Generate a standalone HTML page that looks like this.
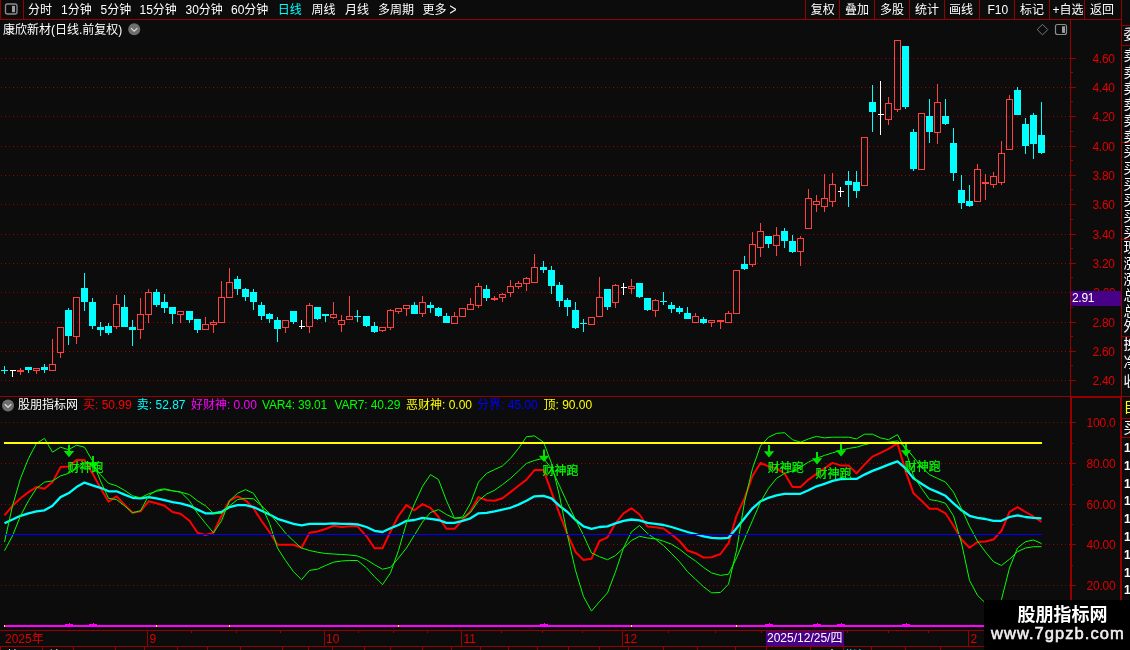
<!DOCTYPE html>
<html><head><meta charset="utf-8"><title>康欣新材 日线</title><style>
html,body{margin:0;padding:0;background:#0c0c0c;overflow:hidden}
body{width:1130px;height:650px;position:relative;overflow:hidden;font-family:"Liberation Sans","Noto Sans CJK SC",sans-serif;font-size:12px}
svg{position:absolute;left:0;top:0}
#txt{position:absolute;left:0;top:0;width:1130px;height:650px;overflow:hidden;will-change:transform}
.t{position:absolute;white-space:nowrap;line-height:16px;font-size:12px}
</style></head><body>
<svg width="1130" height="650" viewBox="0 0 1130 650" shape-rendering="crispEdges">
<defs><clipPath id="ind"><rect x="0" y="398" width="1070" height="230"/></clipPath></defs>
<line x1="0" y1="58.5" x2="1070" y2="58.5" stroke="#9c0000" stroke-width="1" stroke-dasharray="1 3" stroke-dashoffset="-1"/>
<line x1="0" y1="87.5" x2="1070" y2="87.5" stroke="#9c0000" stroke-width="1" stroke-dasharray="1 3" stroke-dashoffset="-1"/>
<line x1="0" y1="116.5" x2="1070" y2="116.5" stroke="#9c0000" stroke-width="1" stroke-dasharray="1 3" stroke-dashoffset="-1"/>
<line x1="0" y1="146.5" x2="1070" y2="146.5" stroke="#9c0000" stroke-width="1" stroke-dasharray="1 3" stroke-dashoffset="-1"/>
<line x1="0" y1="175.5" x2="1070" y2="175.5" stroke="#9c0000" stroke-width="1" stroke-dasharray="1 3" stroke-dashoffset="-1"/>
<line x1="0" y1="204.5" x2="1070" y2="204.5" stroke="#9c0000" stroke-width="1" stroke-dasharray="1 3" stroke-dashoffset="-1"/>
<line x1="0" y1="234.5" x2="1070" y2="234.5" stroke="#9c0000" stroke-width="1" stroke-dasharray="1 3" stroke-dashoffset="-1"/>
<line x1="0" y1="263.5" x2="1070" y2="263.5" stroke="#9c0000" stroke-width="1" stroke-dasharray="1 3" stroke-dashoffset="-1"/>
<line x1="0" y1="292.5" x2="1070" y2="292.5" stroke="#9c0000" stroke-width="1" stroke-dasharray="1 3" stroke-dashoffset="-1"/>
<line x1="0" y1="322.5" x2="1070" y2="322.5" stroke="#9c0000" stroke-width="1" stroke-dasharray="1 3" stroke-dashoffset="-1"/>
<line x1="0" y1="351.5" x2="1070" y2="351.5" stroke="#9c0000" stroke-width="1" stroke-dasharray="1 3" stroke-dashoffset="-1"/>
<line x1="0" y1="380.5" x2="1070" y2="380.5" stroke="#9c0000" stroke-width="1" stroke-dasharray="1 3" stroke-dashoffset="-1"/>
<line x1="0" y1="422.5" x2="1070" y2="422.5" stroke="#9c0000" stroke-width="1" stroke-dasharray="1 3" stroke-dashoffset="-1"/>
<line x1="0" y1="463.5" x2="1070" y2="463.5" stroke="#9c0000" stroke-width="1" stroke-dasharray="1 3" stroke-dashoffset="-1"/>
<line x1="0" y1="504.5" x2="1070" y2="504.5" stroke="#9c0000" stroke-width="1" stroke-dasharray="1 3" stroke-dashoffset="-1"/>
<line x1="0" y1="544.5" x2="1070" y2="544.5" stroke="#9c0000" stroke-width="1" stroke-dasharray="1 3" stroke-dashoffset="-1"/>
<line x1="0" y1="585.5" x2="1070" y2="585.5" stroke="#9c0000" stroke-width="1" stroke-dasharray="1 3" stroke-dashoffset="-1"/>
<rect x="0" y="19" width="1122" height="1" fill="#960000" />
<rect x="0" y="0" width="1" height="19" fill="#960000" />
<rect x="23" y="0" width="1" height="19" fill="#960000" />
<rect x="805" y="0" width="1" height="19" fill="#960000" />
<rect x="839" y="0" width="1" height="19" fill="#960000" />
<rect x="874" y="0" width="1" height="19" fill="#960000" />
<rect x="909" y="0" width="1" height="19" fill="#960000" />
<rect x="944" y="0" width="1" height="19" fill="#960000" />
<rect x="979" y="0" width="1" height="19" fill="#960000" />
<rect x="1014" y="0" width="1" height="19" fill="#960000" />
<rect x="1049" y="0" width="1" height="19" fill="#960000" />
<rect x="1084" y="0" width="1" height="19" fill="#960000" />
<rect x="1070" y="19" width="1" height="627" fill="#960000" />
<rect x="1071" y="397" width="1" height="249" fill="#960000" />
<rect x="1121" y="0" width="1" height="650" fill="#960000" />
<rect x="1120" y="397" width="1" height="253" fill="#960000" />
<rect x="0" y="396" width="1130" height="1" fill="#960000" />
<rect x="1070" y="397" width="51" height="1" fill="#960000" />
<rect x="0" y="630" width="1070" height="1" fill="#960000" />
<rect x="0" y="646" width="1070" height="1" fill="#960000" />
<rect x="1071" y="58" width="5" height="1" fill="#960000" />
<rect x="1071" y="72" width="2" height="1" fill="#960000" />
<rect x="1071" y="87" width="5" height="1" fill="#960000" />
<rect x="1071" y="101" width="2" height="1" fill="#960000" />
<rect x="1071" y="116" width="5" height="1" fill="#960000" />
<rect x="1071" y="131" width="2" height="1" fill="#960000" />
<rect x="1071" y="146" width="5" height="1" fill="#960000" />
<rect x="1071" y="160" width="2" height="1" fill="#960000" />
<rect x="1071" y="175" width="5" height="1" fill="#960000" />
<rect x="1071" y="189" width="2" height="1" fill="#960000" />
<rect x="1071" y="204" width="5" height="1" fill="#960000" />
<rect x="1071" y="219" width="2" height="1" fill="#960000" />
<rect x="1071" y="234" width="5" height="1" fill="#960000" />
<rect x="1071" y="248" width="2" height="1" fill="#960000" />
<rect x="1071" y="263" width="5" height="1" fill="#960000" />
<rect x="1071" y="277" width="2" height="1" fill="#960000" />
<rect x="1071" y="292" width="5" height="1" fill="#960000" />
<rect x="1071" y="307" width="2" height="1" fill="#960000" />
<rect x="1071" y="322" width="5" height="1" fill="#960000" />
<rect x="1071" y="336" width="2" height="1" fill="#960000" />
<rect x="1071" y="351" width="5" height="1" fill="#960000" />
<rect x="1071" y="365" width="2" height="1" fill="#960000" />
<rect x="1071" y="380" width="5" height="1" fill="#960000" />
<rect x="1072" y="422" width="4" height="1" fill="#960000" />
<rect x="1072" y="443" width="1" height="1" fill="#960000" />
<rect x="1072" y="463" width="4" height="1" fill="#960000" />
<rect x="1072" y="484" width="1" height="1" fill="#960000" />
<rect x="1072" y="504" width="4" height="1" fill="#960000" />
<rect x="1072" y="524" width="1" height="1" fill="#960000" />
<rect x="1072" y="544" width="4" height="1" fill="#960000" />
<rect x="1072" y="565" width="1" height="1" fill="#960000" />
<rect x="1072" y="585" width="4" height="1" fill="#960000" />
<rect x="1072" y="606" width="1" height="1" fill="#960000" />
<rect x="1072" y="626" width="4" height="1" fill="#960000" />
<rect x="147" y="630" width="1" height="16" fill="#960000" />
<rect x="324" y="630" width="1" height="16" fill="#960000" />
<rect x="461" y="630" width="1" height="16" fill="#960000" />
<rect x="622" y="630" width="1" height="16" fill="#960000" />
<rect x="968" y="630" width="1" height="16" fill="#960000" />
<rect x="191" y="631" width="1" height="2" fill="#960000" />
<rect x="236" y="631" width="1" height="2" fill="#960000" />
<rect x="280" y="631" width="1" height="2" fill="#960000" />
<rect x="358" y="631" width="1" height="2" fill="#960000" />
<rect x="393" y="631" width="1" height="2" fill="#960000" />
<rect x="427" y="631" width="1" height="2" fill="#960000" />
<rect x="501" y="631" width="1" height="2" fill="#960000" />
<rect x="542" y="631" width="1" height="2" fill="#960000" />
<rect x="582" y="631" width="1" height="2" fill="#960000" />
<rect x="668" y="631" width="1" height="2" fill="#960000" />
<rect x="715" y="631" width="1" height="2" fill="#960000" />
<rect x="761" y="631" width="1" height="2" fill="#960000" />
<rect x="847" y="631" width="1" height="2" fill="#960000" />
<rect x="888" y="631" width="1" height="2" fill="#960000" />
<rect x="928" y="631" width="1" height="2" fill="#960000" />
<rect x="0" y="647" width="1" height="3" fill="#960000" />
<rect x="42" y="647" width="1" height="3" fill="#960000" />
<rect x="73" y="647" width="1" height="3" fill="#960000" />
<rect x="115" y="647" width="1" height="3" fill="#960000" />
<rect x="144" y="647" width="1" height="3" fill="#960000" />
<rect x="177" y="647" width="1" height="3" fill="#960000" />
<rect x="207" y="647" width="1" height="3" fill="#960000" />
<rect x="240" y="647" width="1" height="3" fill="#960000" />
<rect x="282" y="647" width="1" height="3" fill="#960000" />
<rect x="308" y="647" width="1" height="3" fill="#960000" />
<rect x="332" y="647" width="1" height="3" fill="#960000" />
<rect x="364" y="647" width="1" height="3" fill="#960000" />
<rect x="390" y="647" width="1" height="3" fill="#960000" />
<rect x="422" y="647" width="1" height="3" fill="#960000" />
<rect x="451" y="647" width="1" height="3" fill="#960000" />
<rect x="480" y="647" width="1" height="3" fill="#960000" />
<rect x="508" y="647" width="1" height="3" fill="#960000" />
<rect x="537" y="647" width="1" height="3" fill="#960000" />
<rect x="568" y="647" width="1" height="3" fill="#960000" />
<rect x="599" y="647" width="1" height="3" fill="#960000" />
<rect x="628" y="647" width="1" height="3" fill="#960000" />
<rect x="663" y="647" width="1" height="3" fill="#960000" />
<rect x="697" y="647" width="1" height="3" fill="#960000" />
<rect x="735" y="647" width="1" height="3" fill="#960000" />
<rect x="766" y="647" width="1" height="3" fill="#960000" />
<rect x="810" y="647" width="1" height="3" fill="#960000" />
<rect x="843" y="647" width="1" height="3" fill="#960000" />
<rect x="871" y="647" width="1" height="3" fill="#960000" />
<rect x="905" y="647" width="1" height="3" fill="#960000" />
<rect x="940" y="647" width="1" height="3" fill="#960000" />
<rect x="4" y="366" width="1" height="8" fill="#00ffff" />
<rect x="1" y="370" width="7" height="1" fill="#00ffff" />
<rect x="12" y="370" width="1" height="7" fill="#ffffff" />
<rect x="10" y="370" width="6" height="1" fill="#ffffff" />
<rect x="20" y="368" width="1" height="7" fill="#ff4040" />
<rect x="17" y="370" width="7" height="2" fill="#ff4040" />
<rect x="28" y="367" width="1" height="6" fill="#00ffff" />
<rect x="25" y="367" width="7" height="3" fill="#00ffff" />
<rect x="36" y="371" width="1" height="3" fill="#ff4040" />
<rect x="33.5" y="368.5" width="6" height="2" fill="none" stroke="#ff4040" stroke-width="1"/>
<rect x="44" y="364" width="1" height="9" fill="#00ffff" />
<rect x="41" y="367" width="7" height="3" fill="#00ffff" />
<rect x="52" y="339" width="1" height="25" fill="#ff4040" />
<rect x="49.5" y="364.5" width="6" height="6" fill="none" stroke="#ff4040" stroke-width="1"/>
<rect x="60" y="353" width="1" height="5" fill="#ff4040" />
<rect x="57.5" y="327.5" width="6" height="25" fill="none" stroke="#ff4040" stroke-width="1"/>
<rect x="68" y="308" width="1" height="37" fill="#00ffff" />
<rect x="65" y="310" width="7" height="26" fill="#00ffff" />
<rect x="76" y="337" width="1" height="7" fill="#ff4040" />
<rect x="73.5" y="297.5" width="6" height="39" fill="none" stroke="#ff4040" stroke-width="1"/>
<rect x="84" y="273" width="1" height="38" fill="#00ffff" />
<rect x="81" y="288" width="7" height="14" fill="#00ffff" />
<rect x="92" y="298" width="1" height="31" fill="#00ffff" />
<rect x="89" y="302" width="7" height="24" fill="#00ffff" />
<rect x="100" y="322" width="1" height="14" fill="#00ffff" />
<rect x="97" y="327" width="7" height="3" fill="#00ffff" />
<rect x="108" y="323" width="1" height="12" fill="#00ffff" />
<rect x="105" y="326" width="7" height="7" fill="#00ffff" />
<rect x="116" y="295" width="1" height="9" fill="#ff4040" />
<rect x="116" y="327" width="1" height="2" fill="#ff4040" />
<rect x="113.5" y="304.5" width="6" height="22" fill="none" stroke="#ff4040" stroke-width="1"/>
<rect x="124" y="295" width="1" height="32" fill="#00ffff" />
<rect x="121" y="307" width="7" height="20" fill="#00ffff" />
<rect x="132" y="320" width="1" height="26" fill="#00ffff" />
<rect x="129" y="327" width="7" height="3" fill="#00ffff" />
<rect x="140" y="298" width="1" height="16" fill="#ff4040" />
<rect x="140" y="330" width="1" height="9" fill="#ff4040" />
<rect x="137.5" y="314.5" width="6" height="15" fill="none" stroke="#ff4040" stroke-width="1"/>
<rect x="148" y="289" width="1" height="3" fill="#ff4040" />
<rect x="148" y="315" width="1" height="8" fill="#ff4040" />
<rect x="145.5" y="292.5" width="6" height="22" fill="none" stroke="#ff4040" stroke-width="1"/>
<rect x="156" y="289" width="1" height="18" fill="#00ffff" />
<rect x="153" y="292" width="7" height="13" fill="#00ffff" />
<rect x="164" y="294" width="1" height="19" fill="#00ffff" />
<rect x="161" y="302" width="7" height="6" fill="#00ffff" />
<rect x="172" y="307" width="1" height="17" fill="#00ffff" />
<rect x="169" y="307" width="7" height="7" fill="#00ffff" />
<rect x="180" y="315" width="1" height="8" fill="#ff4040" />
<rect x="177.5" y="311.5" width="6" height="3" fill="none" stroke="#ff4040" stroke-width="1"/>
<rect x="189" y="311" width="1" height="12" fill="#00ffff" />
<rect x="186" y="311" width="7" height="9" fill="#00ffff" />
<rect x="197" y="319" width="1" height="14" fill="#00ffff" />
<rect x="194" y="319" width="7" height="11" fill="#00ffff" />
<rect x="205" y="317" width="1" height="7" fill="#ff4040" />
<rect x="202.5" y="324.5" width="6" height="5" fill="none" stroke="#ff4040" stroke-width="1"/>
<rect x="213" y="320" width="1" height="2" fill="#ff4040" />
<rect x="213" y="325" width="1" height="8" fill="#ff4040" />
<rect x="210.5" y="322.5" width="6" height="2" fill="none" stroke="#ff4040" stroke-width="1"/>
<rect x="221" y="281" width="1" height="16" fill="#ff4040" />
<rect x="218.5" y="297.5" width="6" height="25" fill="none" stroke="#ff4040" stroke-width="1"/>
<rect x="229" y="268" width="1" height="14" fill="#ff4040" />
<rect x="226.5" y="282.5" width="6" height="15" fill="none" stroke="#ff4040" stroke-width="1"/>
<rect x="237" y="276" width="1" height="19" fill="#00ffff" />
<rect x="234" y="279" width="7" height="10" fill="#00ffff" />
<rect x="245" y="288" width="1" height="13" fill="#00ffff" />
<rect x="242" y="289" width="7" height="8" fill="#00ffff" />
<rect x="253" y="289" width="1" height="21" fill="#00ffff" />
<rect x="250" y="292" width="7" height="10" fill="#00ffff" />
<rect x="261" y="302" width="1" height="18" fill="#00ffff" />
<rect x="258" y="305" width="7" height="11" fill="#00ffff" />
<rect x="269" y="313" width="1" height="10" fill="#00ffff" />
<rect x="266" y="314" width="7" height="5" fill="#00ffff" />
<rect x="277" y="317" width="1" height="25" fill="#00ffff" />
<rect x="274" y="320" width="7" height="9" fill="#00ffff" />
<rect x="285" y="328" width="1" height="5" fill="#ff4040" />
<rect x="282.5" y="320.5" width="6" height="7" fill="none" stroke="#ff4040" stroke-width="1"/>
<rect x="293" y="311" width="1" height="13" fill="#00ffff" />
<rect x="290" y="311" width="7" height="11" fill="#00ffff" />
<rect x="301" y="320" width="1" height="9" fill="#ffffff" />
<rect x="299" y="326" width="6" height="1" fill="#ffffff" />
<rect x="309" y="303" width="1" height="2" fill="#ff4040" />
<rect x="309" y="327" width="1" height="6" fill="#ff4040" />
<rect x="306.5" y="305.5" width="6" height="21" fill="none" stroke="#ff4040" stroke-width="1"/>
<rect x="317" y="307" width="1" height="13" fill="#00ffff" />
<rect x="314" y="307" width="7" height="12" fill="#00ffff" />
<rect x="325" y="314" width="1" height="8" fill="#00ffff" />
<rect x="322" y="314" width="7" height="2" fill="#00ffff" />
<rect x="333" y="302" width="1" height="12" fill="#ff4040" />
<rect x="333" y="318" width="1" height="1" fill="#ff4040" />
<rect x="330.5" y="314.5" width="6" height="3" fill="none" stroke="#ff4040" stroke-width="1"/>
<rect x="341" y="315" width="1" height="5" fill="#ff4040" />
<rect x="341" y="325" width="1" height="7" fill="#ff4040" />
<rect x="338.5" y="320.5" width="6" height="4" fill="none" stroke="#ff4040" stroke-width="1"/>
<rect x="349" y="296" width="1" height="20" fill="#ff4040" />
<rect x="346.5" y="316.5" width="6" height="3" fill="none" stroke="#ff4040" stroke-width="1"/>
<rect x="357" y="310" width="1" height="12" fill="#00ffff" />
<rect x="354" y="316" width="7" height="1" fill="#00ffff" />
<rect x="366" y="316" width="1" height="11" fill="#00ffff" />
<rect x="363" y="316" width="7" height="10" fill="#00ffff" />
<rect x="374" y="322" width="1" height="11" fill="#00ffff" />
<rect x="371" y="326" width="7" height="6" fill="#00ffff" />
<rect x="382" y="331" width="1" height="1" fill="#ff4040" />
<rect x="379.5" y="327.5" width="6" height="3" fill="none" stroke="#ff4040" stroke-width="1"/>
<rect x="390" y="309" width="1" height="1" fill="#ff4040" />
<rect x="390" y="328" width="1" height="2" fill="#ff4040" />
<rect x="387.5" y="310.5" width="6" height="17" fill="none" stroke="#ff4040" stroke-width="1"/>
<rect x="398" y="312" width="1" height="2" fill="#ff4040" />
<rect x="395.5" y="308.5" width="6" height="3" fill="none" stroke="#ff4040" stroke-width="1"/>
<rect x="406" y="309" width="1" height="7" fill="#ff4040" />
<rect x="403.5" y="305.5" width="6" height="3" fill="none" stroke="#ff4040" stroke-width="1"/>
<rect x="414" y="302" width="1" height="12" fill="#00ffff" />
<rect x="411" y="305" width="7" height="9" fill="#00ffff" />
<rect x="422" y="296" width="1" height="6" fill="#ff4040" />
<rect x="422" y="314" width="1" height="3" fill="#ff4040" />
<rect x="419.5" y="302.5" width="6" height="11" fill="none" stroke="#ff4040" stroke-width="1"/>
<rect x="430" y="302" width="1" height="11" fill="#00ffff" />
<rect x="427" y="305" width="7" height="3" fill="#00ffff" />
<rect x="438" y="307" width="1" height="10" fill="#00ffff" />
<rect x="435" y="308" width="7" height="8" fill="#00ffff" />
<rect x="446" y="313" width="1" height="10" fill="#00ffff" />
<rect x="443" y="316" width="7" height="7" fill="#00ffff" />
<rect x="454" y="312" width="1" height="4" fill="#ff4040" />
<rect x="451.5" y="316.5" width="6" height="7" fill="none" stroke="#ff4040" stroke-width="1"/>
<rect x="459.5" y="308.5" width="6" height="8" fill="none" stroke="#ff4040" stroke-width="1"/>
<rect x="470" y="298" width="1" height="6" fill="#ff4040" />
<rect x="467.5" y="304.5" width="6" height="5" fill="none" stroke="#ff4040" stroke-width="1"/>
<rect x="478" y="283" width="1" height="3" fill="#ff4040" />
<rect x="478" y="306" width="1" height="2" fill="#ff4040" />
<rect x="475.5" y="286.5" width="6" height="19" fill="none" stroke="#ff4040" stroke-width="1"/>
<rect x="486" y="285" width="1" height="16" fill="#00ffff" />
<rect x="483" y="289" width="7" height="9" fill="#00ffff" />
<rect x="494" y="296" width="1" height="5" fill="#ff4040" />
<rect x="491" y="298" width="7" height="2" fill="#ff4040" />
<rect x="502" y="293" width="1" height="1" fill="#ff4040" />
<rect x="502" y="298" width="1" height="4" fill="#ff4040" />
<rect x="499.5" y="294.5" width="6" height="3" fill="none" stroke="#ff4040" stroke-width="1"/>
<rect x="510" y="280" width="1" height="6" fill="#ff4040" />
<rect x="510" y="293" width="1" height="4" fill="#ff4040" />
<rect x="507.5" y="286.5" width="6" height="6" fill="none" stroke="#ff4040" stroke-width="1"/>
<rect x="518" y="281" width="1" height="2" fill="#ff4040" />
<rect x="518" y="287" width="1" height="2" fill="#ff4040" />
<rect x="515.5" y="283.5" width="6" height="3" fill="none" stroke="#ff4040" stroke-width="1"/>
<rect x="526" y="277" width="1" height="1" fill="#ff4040" />
<rect x="526" y="284" width="1" height="7" fill="#ff4040" />
<rect x="523.5" y="278.5" width="6" height="5" fill="none" stroke="#ff4040" stroke-width="1"/>
<rect x="534" y="254" width="1" height="13" fill="#ff4040" />
<rect x="531.5" y="267.5" width="6" height="15" fill="none" stroke="#ff4040" stroke-width="1"/>
<rect x="543" y="261" width="1" height="12" fill="#00ffff" />
<rect x="540" y="267" width="7" height="3" fill="#00ffff" />
<rect x="551" y="266" width="1" height="28" fill="#00ffff" />
<rect x="548" y="270" width="7" height="16" fill="#00ffff" />
<rect x="559" y="282" width="1" height="25" fill="#00ffff" />
<rect x="556" y="285" width="7" height="16" fill="#00ffff" />
<rect x="567" y="298" width="1" height="18" fill="#00ffff" />
<rect x="564" y="300" width="7" height="7" fill="#00ffff" />
<rect x="575" y="302" width="1" height="27" fill="#00ffff" />
<rect x="572" y="310" width="7" height="18" fill="#00ffff" />
<rect x="583" y="319" width="1" height="13" fill="#00ffff" />
<rect x="580" y="323" width="7" height="1" fill="#00ffff" />
<rect x="588.5" y="317.5" width="6" height="7" fill="none" stroke="#ff4040" stroke-width="1"/>
<rect x="599" y="277" width="1" height="20" fill="#ff4040" />
<rect x="596.5" y="297.5" width="6" height="19" fill="none" stroke="#ff4040" stroke-width="1"/>
<rect x="607" y="289" width="1" height="21" fill="#00ffff" />
<rect x="604" y="289" width="7" height="18" fill="#00ffff" />
<rect x="615" y="284" width="1" height="1" fill="#ff4040" />
<rect x="615" y="303" width="1" height="5" fill="#ff4040" />
<rect x="612.5" y="285.5" width="6" height="17" fill="none" stroke="#ff4040" stroke-width="1"/>
<rect x="623" y="283" width="1" height="12" fill="#ffffff" />
<rect x="621" y="287" width="6" height="1" fill="#ffffff" />
<rect x="631" y="279" width="1" height="7" fill="#ff4040" />
<rect x="631" y="289" width="1" height="5" fill="#ff4040" />
<rect x="628.5" y="286.5" width="6" height="2" fill="none" stroke="#ff4040" stroke-width="1"/>
<rect x="639" y="283" width="1" height="15" fill="#00ffff" />
<rect x="636" y="283" width="7" height="14" fill="#00ffff" />
<rect x="647" y="298" width="1" height="13" fill="#00ffff" />
<rect x="644" y="298" width="7" height="12" fill="#00ffff" />
<rect x="655" y="299" width="1" height="1" fill="#ff4040" />
<rect x="655" y="311" width="1" height="6" fill="#ff4040" />
<rect x="652.5" y="300.5" width="6" height="10" fill="none" stroke="#ff4040" stroke-width="1"/>
<rect x="663" y="292" width="1" height="13" fill="#00ffff" />
<rect x="660" y="301" width="7" height="1" fill="#00ffff" />
<rect x="671" y="302" width="1" height="11" fill="#00ffff" />
<rect x="668" y="305" width="7" height="4" fill="#00ffff" />
<rect x="679" y="306" width="1" height="8" fill="#00ffff" />
<rect x="676" y="308" width="7" height="4" fill="#00ffff" />
<rect x="687" y="307" width="1" height="12" fill="#00ffff" />
<rect x="684" y="313" width="7" height="6" fill="#00ffff" />
<rect x="695" y="313" width="1" height="3" fill="#ff4040" />
<rect x="692.5" y="316.5" width="6" height="6" fill="none" stroke="#ff4040" stroke-width="1"/>
<rect x="703" y="317" width="1" height="7" fill="#00ffff" />
<rect x="700" y="319" width="7" height="4" fill="#00ffff" />
<rect x="711" y="323" width="1" height="4" fill="#ff4040" />
<rect x="708.5" y="320.5" width="6" height="2" fill="none" stroke="#ff4040" stroke-width="1"/>
<rect x="720" y="320" width="1" height="9" fill="#ff4040" />
<rect x="717" y="320" width="7" height="2" fill="#ff4040" />
<rect x="728" y="311" width="1" height="2" fill="#ff4040" />
<rect x="725.5" y="313.5" width="6" height="9" fill="none" stroke="#ff4040" stroke-width="1"/>
<rect x="733.5" y="270.5" width="6" height="43" fill="none" stroke="#ff4040" stroke-width="1"/>
<rect x="744" y="256" width="1" height="14" fill="#00ffff" />
<rect x="741" y="264" width="7" height="5" fill="#00ffff" />
<rect x="752" y="232" width="1" height="12" fill="#ff4040" />
<rect x="752" y="265" width="1" height="2" fill="#ff4040" />
<rect x="749.5" y="244.5" width="6" height="20" fill="none" stroke="#ff4040" stroke-width="1"/>
<rect x="760" y="223" width="1" height="8" fill="#ff4040" />
<rect x="760" y="248" width="1" height="9" fill="#ff4040" />
<rect x="757.5" y="231.5" width="6" height="16" fill="none" stroke="#ff4040" stroke-width="1"/>
<rect x="768" y="236" width="1" height="12" fill="#00ffff" />
<rect x="765" y="236" width="7" height="8" fill="#00ffff" />
<rect x="776" y="227" width="1" height="8" fill="#ff4040" />
<rect x="776" y="246" width="1" height="10" fill="#ff4040" />
<rect x="773.5" y="235.5" width="6" height="10" fill="none" stroke="#ff4040" stroke-width="1"/>
<rect x="784" y="228" width="1" height="20" fill="#00ffff" />
<rect x="781" y="231" width="7" height="10" fill="#00ffff" />
<rect x="792" y="235" width="1" height="18" fill="#00ffff" />
<rect x="789" y="241" width="7" height="11" fill="#00ffff" />
<rect x="800" y="236" width="1" height="2" fill="#ff4040" />
<rect x="800" y="252" width="1" height="14" fill="#ff4040" />
<rect x="797.5" y="238.5" width="6" height="13" fill="none" stroke="#ff4040" stroke-width="1"/>
<rect x="808" y="189" width="1" height="9" fill="#ff4040" />
<rect x="805.5" y="198.5" width="6" height="30" fill="none" stroke="#ff4040" stroke-width="1"/>
<rect x="816" y="195" width="1" height="6" fill="#ff4040" />
<rect x="816" y="205" width="1" height="7" fill="#ff4040" />
<rect x="813.5" y="201.5" width="6" height="3" fill="none" stroke="#ff4040" stroke-width="1"/>
<rect x="824" y="174" width="1" height="24" fill="#ff4040" />
<rect x="824" y="207" width="1" height="5" fill="#ff4040" />
<rect x="821.5" y="198.5" width="6" height="8" fill="none" stroke="#ff4040" stroke-width="1"/>
<rect x="832" y="173" width="1" height="11" fill="#ff4040" />
<rect x="832" y="202" width="1" height="5" fill="#ff4040" />
<rect x="829.5" y="184.5" width="6" height="17" fill="none" stroke="#ff4040" stroke-width="1"/>
<rect x="840" y="187" width="1" height="10" fill="#ffffff" />
<rect x="838" y="191" width="6" height="1" fill="#ffffff" />
<rect x="848" y="171" width="1" height="36" fill="#00ffff" />
<rect x="845" y="181" width="7" height="4" fill="#00ffff" />
<rect x="856" y="171" width="1" height="27" fill="#00ffff" />
<rect x="853" y="182" width="7" height="9" fill="#00ffff" />
<rect x="861.5" y="137.5" width="6" height="48" fill="none" stroke="#ff4040" stroke-width="1"/>
<rect x="872" y="85" width="1" height="47" fill="#00ffff" />
<rect x="869" y="102" width="7" height="10" fill="#00ffff" />
<rect x="880" y="81" width="1" height="54" fill="#ffffff" />
<rect x="878" y="114" width="6" height="1" fill="#ffffff" />
<rect x="888" y="97" width="1" height="6" fill="#ff4040" />
<rect x="888" y="120" width="1" height="5" fill="#ff4040" />
<rect x="885.5" y="103.5" width="6" height="16" fill="none" stroke="#ff4040" stroke-width="1"/>
<rect x="897" y="110" width="1" height="2" fill="#ff4040" />
<rect x="894.5" y="40.5" width="6" height="69" fill="none" stroke="#ff4040" stroke-width="1"/>
<rect x="905" y="46" width="1" height="63" fill="#00ffff" />
<rect x="902" y="46" width="7" height="61" fill="#00ffff" />
<rect x="913" y="129" width="1" height="42" fill="#00ffff" />
<rect x="910" y="132" width="7" height="37" fill="#00ffff" />
<rect x="918.5" y="113.5" width="6" height="56" fill="none" stroke="#ff4040" stroke-width="1"/>
<rect x="929" y="99" width="1" height="44" fill="#00ffff" />
<rect x="926" y="116" width="7" height="16" fill="#00ffff" />
<rect x="937" y="84" width="1" height="18" fill="#ff4040" />
<rect x="937" y="133" width="1" height="11" fill="#ff4040" />
<rect x="934.5" y="102.5" width="6" height="30" fill="none" stroke="#ff4040" stroke-width="1"/>
<rect x="945" y="99" width="1" height="26" fill="#00ffff" />
<rect x="942" y="116" width="7" height="8" fill="#00ffff" />
<rect x="953" y="128" width="1" height="53" fill="#00ffff" />
<rect x="950" y="143" width="7" height="30" fill="#00ffff" />
<rect x="961" y="175" width="1" height="34" fill="#00ffff" />
<rect x="958" y="190" width="7" height="13" fill="#00ffff" />
<rect x="969" y="185" width="1" height="22" fill="#00ffff" />
<rect x="966" y="201" width="7" height="5" fill="#00ffff" />
<rect x="977" y="164" width="1" height="5" fill="#ff4040" />
<rect x="974.5" y="169.5" width="6" height="32" fill="none" stroke="#ff4040" stroke-width="1"/>
<rect x="985" y="174" width="1" height="26" fill="#ff4040" />
<rect x="982" y="182" width="7" height="2" fill="#ff4040" />
<rect x="993" y="172" width="1" height="4" fill="#ff4040" />
<rect x="993" y="185" width="1" height="3" fill="#ff4040" />
<rect x="990.5" y="176.5" width="6" height="8" fill="none" stroke="#ff4040" stroke-width="1"/>
<rect x="1001" y="141" width="1" height="12" fill="#ff4040" />
<rect x="1001" y="183" width="1" height="2" fill="#ff4040" />
<rect x="998.5" y="153.5" width="6" height="29" fill="none" stroke="#ff4040" stroke-width="1"/>
<rect x="1009" y="95" width="1" height="4" fill="#ff4040" />
<rect x="1006.5" y="99.5" width="6" height="50" fill="none" stroke="#ff4040" stroke-width="1"/>
<rect x="1017" y="87" width="1" height="28" fill="#00ffff" />
<rect x="1014" y="90" width="7" height="25" fill="#00ffff" />
<rect x="1025" y="118" width="1" height="36" fill="#00ffff" />
<rect x="1022" y="124" width="7" height="22" fill="#00ffff" />
<rect x="1033" y="113" width="1" height="46" fill="#00ffff" />
<rect x="1030" y="115" width="7" height="29" fill="#00ffff" />
<rect x="1041" y="102" width="1" height="52" fill="#00ffff" />
<rect x="1038" y="135" width="7" height="18" fill="#00ffff" />
<rect x="4" y="625" width="981" height="2" fill="#ff00ff" />
<rect x="65" y="624" width="8" height="1" fill="#ff00ff" />
<rect x="69" y="623" width="1" height="1" fill="#ff00ff" />
<rect x="89" y="624" width="8" height="1" fill="#ff00ff" />
<rect x="93" y="623" width="1" height="1" fill="#ff00ff" />
<rect x="540" y="624" width="8" height="1" fill="#ff00ff" />
<rect x="544" y="623" width="1" height="1" fill="#ff00ff" />
<rect x="765" y="624" width="8" height="1" fill="#ff00ff" />
<rect x="769" y="623" width="1" height="1" fill="#ff00ff" />
<rect x="813" y="624" width="8" height="1" fill="#ff00ff" />
<rect x="817" y="623" width="1" height="1" fill="#ff00ff" />
<rect x="837" y="624" width="8" height="1" fill="#ff00ff" />
<rect x="841" y="623" width="1" height="1" fill="#ff00ff" />
<rect x="902" y="624" width="8" height="1" fill="#ff00ff" />
<rect x="906" y="623" width="1" height="1" fill="#ff00ff" />
<rect x="4" y="625" width="1" height="2" fill="#ffff00" />
<rect x="156" y="625" width="1" height="2" fill="#ffff00" />
<rect x="229" y="625" width="1" height="2" fill="#ffff00" />
<rect x="398" y="625" width="1" height="2" fill="#ffff00" />
<rect x="631" y="625" width="1" height="2" fill="#ffff00" />
<rect x="736" y="625" width="1" height="2" fill="#ffff00" />
<g clip-path="url(#ind)" shape-rendering="auto">
<polyline points="4.5,515.3 12.5,505.8 20.5,498.3 28.5,492.1 36.5,487.1 44.5,488.8 52.5,482.1 60.5,467.1 68.5,466.6 76.5,460.1 84.5,460.1 92.5,473.4 100.5,488.3 108.5,501.6 116.5,496.3 124.5,504.6 132.5,512.8 140.5,511.3 148.5,501.3 156.5,503.3 164.5,505.8 172.5,512.0 180.5,513.8 189.5,520.8 197.5,532.8 205.5,535.0 213.5,532.8 221.5,515.8 229.5,500.8 237.5,496.3 245.5,500.3 253.5,508.3 261.5,520.8 269.5,532.0 277.5,544.7 285.5,544.7 293.5,544.7 301.5,547.7 309.5,532.8 317.5,531.5 325.5,529.0 333.5,525.8 341.5,527.0 349.5,526.3 357.5,526.3 366.5,536.3 374.5,548.2 382.5,548.2 390.5,531.5 398.5,515.8 406.5,505.1 414.5,510.3 422.5,504.1 430.5,507.8 438.5,517.0 446.5,528.8 454.5,528.8 462.5,520.0 470.5,511.3 478.5,497.1 486.5,500.3 494.5,500.8 502.5,498.3 510.5,492.1 518.5,485.8 526.5,479.6 534.5,470.1 543.5,470.1 551.5,492.1 559.5,513.8 567.5,534.5 575.5,552.0 583.5,560.0 591.5,558.7 599.5,541.0 607.5,537.3 615.5,523.3 623.5,513.3 631.5,508.3 639.5,514.5 647.5,526.5 655.5,527.3 663.5,528.5 671.5,534.5 679.5,541.0 687.5,550.5 695.5,553.2 703.5,557.5 711.5,557.2 720.5,554.0 728.5,543.2 736.5,515.8 744.5,498.3 752.5,475.9 760.5,462.9 768.5,466.4 776.5,468.4 784.5,473.4 792.5,487.1 800.5,487.1 808.5,479.6 816.5,473.9 824.5,468.4 832.5,462.9 840.5,465.4 848.5,465.4 856.5,473.4 864.5,464.6 872.5,456.6 880.5,452.9 888.5,448.9 897.5,443.4 905.5,470.9 913.5,493.3 921.5,500.8 929.5,508.8 937.5,508.8 945.5,513.3 953.5,525.8 961.5,539.5 969.5,547.7 977.5,542.0 985.5,541.5 993.5,539.5 1001.5,530.8 1009.5,512.0 1017.5,507.1 1025.5,512.0 1033.5,516.5 1041.5,522.0" fill="none" stroke="#ff0000" stroke-width="2.0" stroke-linejoin="round" />
<polyline points="4.5,523.3 12.5,519.5 20.5,515.8 28.5,513.3 36.5,511.3 44.5,510.3 52.5,505.8 60.5,497.1 68.5,493.3 76.5,487.1 84.5,482.6 92.5,485.3 100.5,487.8 108.5,491.3 116.5,491.3 124.5,494.6 132.5,497.8 140.5,498.3 148.5,497.1 156.5,498.3 164.5,500.1 172.5,502.1 180.5,503.3 189.5,505.8 197.5,509.6 205.5,513.3 213.5,513.3 221.5,512.0 229.5,507.1 237.5,505.1 245.5,505.1 253.5,507.1 261.5,510.8 269.5,514.5 277.5,518.8 285.5,521.3 293.5,523.8 301.5,525.3 309.5,523.8 317.5,523.8 325.5,523.8 333.5,523.3 341.5,523.8 349.5,523.8 357.5,524.3 366.5,527.0 374.5,530.8 382.5,532.0 390.5,528.3 398.5,525.0 406.5,520.8 414.5,520.0 422.5,517.8 430.5,518.8 438.5,520.0 446.5,522.8 454.5,522.8 462.5,520.8 470.5,518.3 478.5,513.3 486.5,512.8 494.5,511.3 502.5,509.6 510.5,507.8 518.5,504.6 526.5,500.8 534.5,496.3 543.5,495.8 551.5,498.3 559.5,505.8 567.5,512.0 575.5,520.0 583.5,526.3 591.5,528.8 599.5,527.0 607.5,526.3 615.5,523.3 623.5,520.8 631.5,519.5 639.5,520.3 647.5,522.8 655.5,523.8 663.5,525.0 671.5,527.0 679.5,529.5 687.5,532.0 695.5,534.0 703.5,536.3 711.5,537.8 720.5,538.3 728.5,537.8 736.5,528.3 744.5,518.3 752.5,508.3 760.5,501.3 768.5,497.8 776.5,495.3 784.5,493.8 792.5,493.8 800.5,493.8 808.5,490.3 816.5,486.3 824.5,483.8 832.5,480.9 840.5,479.1 848.5,478.9 856.5,478.9 864.5,474.6 872.5,470.9 880.5,467.9 888.5,464.6 897.5,461.4 905.5,468.4 913.5,478.4 921.5,483.8 929.5,488.8 937.5,492.1 945.5,495.8 953.5,503.3 961.5,510.3 969.5,515.8 977.5,517.8 985.5,519.0 993.5,520.8 1001.5,520.8 1009.5,517.0 1017.5,515.3 1025.5,517.0 1033.5,517.8 1041.5,518.3" fill="none" stroke="#00ffff" stroke-width="2.3" stroke-linejoin="round" />
<polyline points="4.5,542.0 12.5,505.8 20.5,478.4 28.5,458.4 36.5,443.4 44.5,438.4 52.5,452.2 60.5,447.2 68.5,449.7 76.5,445.2 84.5,447.2 92.5,460.9 100.5,480.9 108.5,498.3 116.5,499.6 124.5,505.8 132.5,512.8 140.5,510.8 148.5,495.8 156.5,490.3 164.5,488.8 172.5,490.8 180.5,492.1 189.5,500.8 197.5,513.3 205.5,523.3 213.5,532.8 221.5,520.8 229.5,500.8 237.5,493.3 245.5,489.6 253.5,493.3 261.5,505.8 269.5,523.3 277.5,548.0 285.5,560.5 293.5,571.7 301.5,579.7 309.5,570.4 317.5,569.2 325.5,565.5 333.5,562.2 341.5,561.0 349.5,560.5 357.5,560.5 366.5,567.9 374.5,576.7 382.5,584.7 390.5,572.9 398.5,550.5 406.5,523.0 414.5,503.8 422.5,486.3 430.5,474.6 438.5,479.6 446.5,500.8 454.5,518.3 462.5,517.0 470.5,503.3 478.5,482.1 486.5,473.4 494.5,469.6 502.5,465.9 510.5,458.4 518.5,448.4 526.5,436.7 534.5,435.9 543.5,442.2 551.5,463.4 559.5,495.8 567.5,535.5 575.5,570.4 583.5,596.6 591.5,611.1 599.5,601.6 607.5,592.9 615.5,571.7 623.5,548.0 631.5,531.8 639.5,525.5 647.5,533.5 655.5,539.2 663.5,545.5 671.5,553.5 679.5,561.7 687.5,571.7 695.5,579.2 703.5,586.7 711.5,592.9 720.5,592.4 728.5,584.2 736.5,550.5 744.5,502.1 752.5,468.4 760.5,445.9 768.5,437.2 776.5,433.4 784.5,432.7 792.5,439.7 800.5,442.2 808.5,438.9 816.5,436.4 824.5,437.9 832.5,437.2 840.5,437.2 848.5,437.2 856.5,438.9 864.5,434.2 872.5,434.2 880.5,437.9 888.5,439.7 897.5,434.7 905.5,449.7 913.5,475.9 921.5,488.3 929.5,499.6 937.5,500.8 945.5,503.3 953.5,515.8 961.5,543.0 969.5,580.4 977.5,595.4 985.5,603.1 993.5,608.1 1001.5,599.4 1009.5,567.9 1017.5,548.0 1025.5,541.7 1033.5,540.0 1041.5,543.5" fill="none" stroke="#00ff00" stroke-width="1" stroke-linejoin="round" />
<polyline points="4.5,550.7 12.5,535.8 20.5,515.8 28.5,500.8 36.5,488.3 44.5,482.1 52.5,480.9 60.5,475.9 68.5,473.4 76.5,468.4 84.5,462.1 92.5,463.4 100.5,474.6 108.5,483.3 116.5,485.8 124.5,490.3 132.5,495.8 140.5,497.8 148.5,493.8 156.5,491.3 164.5,489.6 172.5,490.8 180.5,492.1 189.5,494.6 197.5,500.8 205.5,505.8 213.5,513.3 221.5,513.3 229.5,505.8 237.5,499.6 245.5,498.3 253.5,498.8 261.5,505.8 269.5,513.3 277.5,523.0 285.5,533.0 293.5,541.0 301.5,548.0 309.5,550.5 317.5,552.2 325.5,553.5 333.5,554.0 341.5,554.5 349.5,555.0 357.5,556.0 366.5,559.7 374.5,564.7 382.5,569.2 390.5,567.4 398.5,558.0 406.5,548.0 414.5,535.0 422.5,522.0 430.5,512.5 438.5,509.6 446.5,514.5 454.5,518.3 462.5,518.0 470.5,512.5 478.5,500.8 486.5,494.1 494.5,490.3 502.5,484.6 510.5,478.4 518.5,470.9 526.5,463.4 534.5,460.4 543.5,458.4 551.5,468.4 559.5,485.8 567.5,503.3 575.5,519.5 583.5,535.5 591.5,553.0 599.5,556.7 607.5,559.7 615.5,555.5 623.5,548.0 631.5,540.5 639.5,536.3 647.5,538.0 655.5,538.8 663.5,541.2 671.5,544.2 679.5,549.2 687.5,555.5 695.5,561.0 703.5,567.4 711.5,572.9 720.5,575.4 728.5,574.2 736.5,558.0 744.5,538.8 752.5,520.5 760.5,502.1 768.5,488.3 776.5,478.4 784.5,473.4 792.5,470.9 800.5,467.1 808.5,462.1 816.5,458.4 824.5,455.4 832.5,452.9 840.5,450.4 848.5,448.4 856.5,447.2 864.5,444.7 872.5,442.9 880.5,442.9 888.5,442.2 897.5,440.9 905.5,447.2 913.5,457.1 921.5,467.1 929.5,474.6 937.5,478.4 945.5,482.1 953.5,492.1 961.5,508.8 969.5,526.3 977.5,541.2 985.5,552.0 993.5,561.7 1001.5,565.5 1009.5,559.2 1017.5,551.7 1025.5,548.0 1033.5,546.7 1041.5,546.7" fill="none" stroke="#00ff00" stroke-width="1" stroke-linejoin="round" />
</g>
<rect x="4" y="534" width="1038" height="1" fill="#0000ff" />
<rect x="4" y="442" width="1038" height="2" fill="#ffff00" />
<path d="M68 444.7h2v6.3h4.2l-5.2 6.2l-5.2 -6.2h4.2z" fill="#00e400" shape-rendering="auto"/>
<path d="M92 456h2v6.3h4.2l-5.2 6.2l-5.2 -6.2h4.2z" fill="#00e400" shape-rendering="auto"/>
<path d="M543 449.5h2v6.3h4.2l-5.2 6.2l-5.2 -6.2h4.2z" fill="#00e400" shape-rendering="auto"/>
<path d="M768 445h2v6.3h4.2l-5.2 6.2l-5.2 -6.2h4.2z" fill="#00e400" shape-rendering="auto"/>
<path d="M816 452h2v6.3h4.2l-5.2 6.2l-5.2 -6.2h4.2z" fill="#00e400" shape-rendering="auto"/>
<path d="M840 444h2v6.3h4.2l-5.2 6.2l-5.2 -6.2h4.2z" fill="#00e400" shape-rendering="auto"/>
<path d="M905 444h2v6.3h4.2l-5.2 6.2l-5.2 -6.2h4.2z" fill="#00e400" shape-rendering="auto"/>
<rect x="766" y="631" width="78" height="15" fill="#480088" />
<rect x="984" y="600" width="146" height="50" fill="#000000" />
<g shape-rendering="auto">
<rect x="5.5" y="4" width="11.5" height="10" rx="2" fill="none" stroke="#8c8c8c" stroke-width="1.3"/><rect x="12" y="5.8" width="3" height="6.4" fill="#9c9c9c"/>
<rect x="1055.5" y="24.5" width="11" height="10" rx="2" fill="none" stroke="#8c8c8c" stroke-width="1.2"/><rect x="1062" y="26.3" width="3" height="6.6" fill="#9c9c9c"/>
<path d="M1042.5 24.3l5.3 5.3l-5.3 5.3l-5.3 -5.3z" fill="none" stroke="#787878" stroke-width="1"/>
<circle cx="134.2" cy="29.3" r="6" fill="#6e6e6e"/><path d="M131.0 28.1l3.2 3l3.2 -3" fill="none" stroke="#d8d8d8" stroke-width="1.3"/>
<circle cx="8" cy="405.5" r="6" fill="#6e6e6e"/><path d="M4.8 404.3l3.2 3l3.2 -3" fill="none" stroke="#d8d8d8" stroke-width="1.3"/>
</g>
<rect x="1122" y="25" width="8" height="1" fill="#960000" />
<rect x="1122" y="45" width="8" height="1" fill="#960000" />
<rect x="1122" y="142" width="8" height="1" fill="#960000" />
<rect x="1122" y="239" width="8" height="1" fill="#960000" />
<rect x="1122" y="336" width="8" height="1" fill="#960000" />
<rect x="1122" y="418" width="8" height="1" fill="#960000" />
<rect x="1122" y="437" width="8" height="1" fill="#960000" />
</svg>
<div id="txt">
<div class="t" style="left:28px;top:1.7px;color:#ffffff;">分时</div>
<div class="t" style="left:61px;top:1.7px;color:#ffffff;">1分钟</div>
<div class="t" style="left:100.5px;top:1.7px;color:#ffffff;">5分钟</div>
<div class="t" style="left:139.5px;top:1.7px;color:#ffffff;">15分钟</div>
<div class="t" style="left:185.5px;top:1.7px;color:#ffffff;">30分钟</div>
<div class="t" style="left:231px;top:1.7px;color:#ffffff;">60分钟</div>
<div class="t" style="left:277.8px;top:1.7px;color:#00ffff;">日线</div>
<div class="t" style="left:311.5px;top:1.7px;color:#ffffff;">周线</div>
<div class="t" style="left:345px;top:1.7px;color:#ffffff;">月线</div>
<div class="t" style="left:378px;top:1.7px;color:#ffffff;">多周期</div>
<div class="t" style="left:422.5px;top:1.7px;color:#ffffff;">更多<span style="display:inline-block;margin-left:3px;transform:scaleY(1.35);font-weight:normal">&gt;</span></div>
<div class="t" style="left:810.7px;top:1.7px;color:#ffffff;">复权</div>
<div class="t" style="left:845px;top:1.7px;color:#ffffff;">叠加</div>
<div class="t" style="left:880px;top:1.7px;color:#ffffff;">多股</div>
<div class="t" style="left:915px;top:1.7px;color:#ffffff;">统计</div>
<div class="t" style="left:949px;top:1.7px;color:#ffffff;">画线</div>
<div class="t" style="left:987.5px;top:1.7px;color:#ffffff;">F10</div>
<div class="t" style="left:1020px;top:1.7px;color:#ffffff;">标记</div>
<div class="t" style="left:1052.5px;top:1.7px;color:#ffffff;">+自选</div>
<div class="t" style="left:1090px;top:1.7px;color:#ffffff;">返回</div>
<div class="t" style="left:3px;top:21.7px;color:#ffffff;">康欣新材(日线.前复权)</div>
<div class="t" style="left:1084.8px;top:51px;color:#e00000;width:30px;text-align:right;letter-spacing:-0.25px;">4.60</div>
<div class="t" style="left:1084.8px;top:80px;color:#e00000;width:30px;text-align:right;letter-spacing:-0.25px;">4.40</div>
<div class="t" style="left:1084.8px;top:109px;color:#e00000;width:30px;text-align:right;letter-spacing:-0.25px;">4.20</div>
<div class="t" style="left:1084.8px;top:139px;color:#e00000;width:30px;text-align:right;letter-spacing:-0.25px;">4.00</div>
<div class="t" style="left:1084.8px;top:168px;color:#e00000;width:30px;text-align:right;letter-spacing:-0.25px;">3.80</div>
<div class="t" style="left:1084.8px;top:197px;color:#e00000;width:30px;text-align:right;letter-spacing:-0.25px;">3.60</div>
<div class="t" style="left:1084.8px;top:227px;color:#e00000;width:30px;text-align:right;letter-spacing:-0.25px;">3.40</div>
<div class="t" style="left:1084.8px;top:256px;color:#e00000;width:30px;text-align:right;letter-spacing:-0.25px;">3.20</div>
<div class="t" style="left:1084.8px;top:315px;color:#e00000;width:30px;text-align:right;letter-spacing:-0.25px;">2.80</div>
<div class="t" style="left:1084.8px;top:344px;color:#e00000;width:30px;text-align:right;letter-spacing:-0.25px;">2.60</div>
<div class="t" style="left:1084.8px;top:373px;color:#e00000;width:30px;text-align:right;letter-spacing:-0.25px;">2.40</div>
<div class="t" style="left:1075.5px;top:415px;color:#e00000;width:40px;text-align:right;letter-spacing:-0.2px;">100.0</div>
<div class="t" style="left:1075.5px;top:456px;color:#e00000;width:40px;text-align:right;letter-spacing:-0.2px;">80.00</div>
<div class="t" style="left:1075.5px;top:497px;color:#e00000;width:40px;text-align:right;letter-spacing:-0.2px;">60.00</div>
<div class="t" style="left:1075.5px;top:537px;color:#e00000;width:40px;text-align:right;letter-spacing:-0.2px;">40.00</div>
<div class="t" style="left:1075.5px;top:578px;color:#e00000;width:40px;text-align:right;letter-spacing:-0.2px;">20.00</div>
<div class="t" style="left:1085.5px;top:285px;color:#e00000;width:30px;text-align:right;letter-spacing:-0.25px;">3.00</div>
<div style="position:absolute;left:1071px;top:291px;width:50px;height:15px;background:#480088"></div>
<div class="t" style="left:1072px;top:289.5px;color:#fff;letter-spacing:-0.3px;">2.91</div>
<div class="t" style="left:18px;top:397.3px;color:#ffffff;">股朋指标网</div>
<div class="t" style="left:83px;top:397.3px;color:#ff0000;">买: 50.99</div>
<div class="t" style="left:136.8px;top:397.3px;color:#00ffff;">卖: 52.87</div>
<div class="t" style="left:190.9px;top:397.3px;color:#ff00ff;">好财神: 0.00</div>
<div class="t" style="left:262px;top:397.3px;color:#00ff00;"><span style="letter-spacing:-0.2px">VAR4: 39.01</span></div>
<div class="t" style="left:334.4px;top:397.3px;color:#00ff00;"><span style="letter-spacing:-0.12px">VAR7: 40.29</span></div>
<div class="t" style="left:406px;top:397.3px;color:#ffff00;">恶财神: 0.00</div>
<div class="t" style="left:477.1px;top:397.3px;color:#0000ff;">分界: 45.00</div>
<div class="t" style="left:543.5px;top:397.3px;color:#ffff00;">顶: 90.00</div>
<div class="t" style="left:67.4px;top:459.5px;color:#00ff00;-webkit-text-stroke:0.25px #00ff00;">财神跑</div>
<div class="t" style="left:542.5px;top:463px;color:#00ff00;-webkit-text-stroke:0.25px #00ff00;">财神跑</div>
<div class="t" style="left:767.8px;top:459.5px;color:#00ff00;-webkit-text-stroke:0.25px #00ff00;">财神跑</div>
<div class="t" style="left:815.6px;top:466.2px;color:#00ff00;-webkit-text-stroke:0.25px #00ff00;">财神跑</div>
<div class="t" style="left:904.8px;top:459.2px;color:#00ff00;-webkit-text-stroke:0.25px #00ff00;">财神跑</div>
<div class="t" style="left:5px;top:630.7px;color:#e00000;">2025年</div>
<div class="t" style="left:149.6px;top:630.7px;color:#e00000;">9</div>
<div class="t" style="left:326px;top:630.7px;color:#e00000;">10</div>
<div class="t" style="left:463.4px;top:630.7px;color:#e00000;">11</div>
<div class="t" style="left:623.8px;top:630.7px;color:#e00000;">12</div>
<div class="t" style="left:970.5px;top:630.7px;color:#e00000;">2</div>
<div class="t" style="left:767px;top:629.5px;color:#fff;">2025/12/25/四</div>
<div class="t" style="left:7px;top:647.5px;color:#fff;">扩展</div>
<div class="t" style="left:48px;top:647.5px;color:#fff;">关</div>
<div class="t" style="left:826px;top:647.5px;color:#fff;">十</div>
<div class="t" style="left:845px;top:647.5px;color:#00ffff;">指标</div>
<div class="t" style="left:1017.5px;top:603px;color:#fff;font-size:18px;font-weight:bold;line-height:24px;">股朋指标网</div>
<div class="t" style="left:991px;top:621px;color:#f4f0f0;font-size:16.5px;line-height:24px;letter-spacing:1.05px;-webkit-text-stroke:0.55px #f4f0f0;">www.7gpzb.com</div>
<div class="t" style="left:1123.5px;top:27.4px;color:#fff;font-size:13.5px;">委</div>
<div class="t" style="left:1123.5px;top:48.4px;color:#fff;font-size:13.5px;">卖</div>
<div class="t" style="left:1123.5px;top:64.5px;color:#fff;font-size:13.5px;">卖</div>
<div class="t" style="left:1123.5px;top:80.6px;color:#fff;font-size:13.5px;">卖</div>
<div class="t" style="left:1123.5px;top:96.7px;color:#fff;font-size:13.5px;">卖</div>
<div class="t" style="left:1123.5px;top:112.8px;color:#fff;font-size:13.5px;">卖</div>
<div class="t" style="left:1123.5px;top:128.9px;color:#fff;font-size:13.5px;">卖</div>
<div class="t" style="left:1123.5px;top:144.4px;color:#fff;font-size:13.5px;">买</div>
<div class="t" style="left:1123.5px;top:160.5px;color:#fff;font-size:13.5px;">买</div>
<div class="t" style="left:1123.5px;top:176.6px;color:#fff;font-size:13.5px;">买</div>
<div class="t" style="left:1123.5px;top:192.7px;color:#fff;font-size:13.5px;">买</div>
<div class="t" style="left:1123.5px;top:208.8px;color:#fff;font-size:13.5px;">买</div>
<div class="t" style="left:1123.5px;top:224.9px;color:#fff;font-size:13.5px;">买</div>
<div class="t" style="left:1123.5px;top:240.4px;color:#fff;font-size:13.5px;">现</div>
<div class="t" style="left:1123.5px;top:256.4px;color:#fff;font-size:13.5px;">涨</div>
<div class="t" style="left:1123.5px;top:272.4px;color:#fff;font-size:13.5px;">涨</div>
<div class="t" style="left:1123.5px;top:288.4px;color:#fff;font-size:13.5px;">总</div>
<div class="t" style="left:1123.5px;top:304.4px;color:#fff;font-size:13.5px;">总</div>
<div class="t" style="left:1123.5px;top:319.4px;color:#fff;font-size:13.5px;">外</div>
<div class="t" style="left:1123.5px;top:337.0px;color:#fff;font-size:13.5px;">换</div>
<div class="t" style="left:1123.5px;top:355.4px;color:#fff;font-size:13.5px;">净</div>
<div class="t" style="left:1123.5px;top:373.7px;color:#fff;font-size:13.5px;">收</div>
<div class="t" style="left:1123.5px;top:398.8px;color:#ffff00;font-size:15px;">自</div>
<div class="t" style="left:1123.5px;top:419.8px;color:#fff;font-size:15px;">买</div>
<div class="t" style="left:1124px;top:440.0px;color:#fff;font-weight:bold;">1</div>
<div class="t" style="left:1124px;top:457.8px;color:#fff;font-weight:bold;">1</div>
<div class="t" style="left:1124px;top:475.6px;color:#fff;font-weight:bold;">1</div>
<div class="t" style="left:1124px;top:493.4px;color:#fff;font-weight:bold;">1</div>
<div class="t" style="left:1124px;top:511.2px;color:#fff;font-weight:bold;">1</div>
<div class="t" style="left:1124px;top:529.0px;color:#fff;font-weight:bold;">1</div>
<div class="t" style="left:1124px;top:546.8px;color:#fff;font-weight:bold;">1</div>
<div class="t" style="left:1124px;top:564.6px;color:#fff;font-weight:bold;">1</div>
<div class="t" style="left:1124px;top:582.4px;color:#fff;font-weight:bold;">1</div>
</div>
</body></html>
